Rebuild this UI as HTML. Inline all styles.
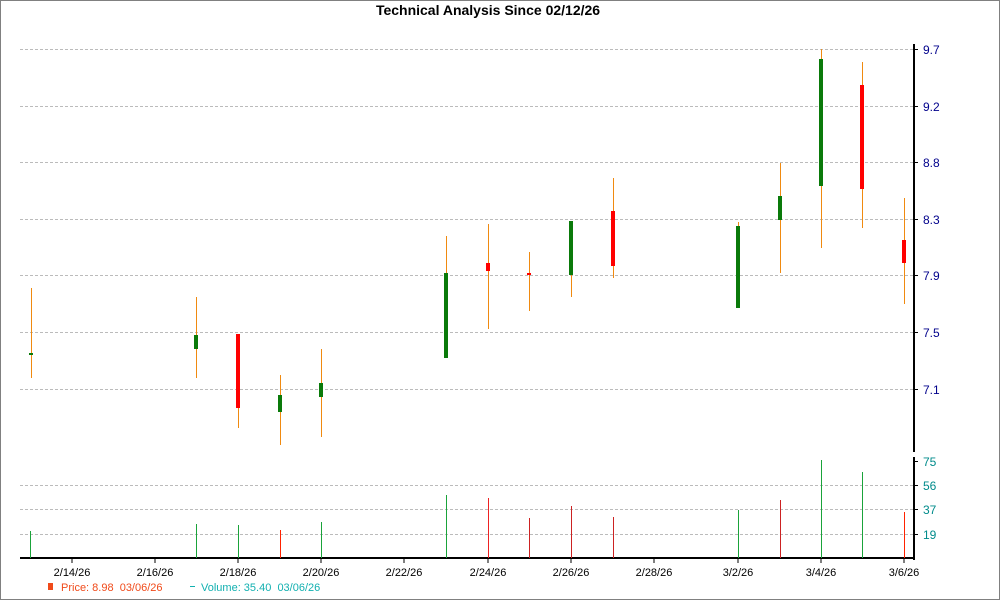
<!DOCTYPE html><html><head><meta charset="utf-8"><style>body{margin:0;background:#fff}svg{display:block;font-family:"Liberation Sans",sans-serif}text{white-space:pre}</style></head><body>
<svg width="1000" height="600" viewBox="0 0 1000 600">
<rect x="0.5" y="0.5" width="999" height="599" fill="#fff" stroke="#808080"/>
<text x="488" y="15" text-anchor="middle" font-size="14" font-weight="bold">Technical Analysis Since 02/12/26</text>
<g stroke="#bbb" stroke-dasharray="3,2" stroke-width="1">
<line x1="20" x2="914" y1="49.5" y2="49.5"/><line x1="20" x2="914" y1="106.5" y2="106.5"/><line x1="20" x2="914" y1="162.5" y2="162.5"/><line x1="20" x2="914" y1="219.5" y2="219.5"/><line x1="20" x2="914" y1="275.5" y2="275.5"/><line x1="20" x2="914" y1="332.5" y2="332.5"/><line x1="20" x2="914" y1="389.5" y2="389.5"/>
<line x1="20" x2="914" y1="485.5" y2="485.5"/><line x1="20" x2="914" y1="509.5" y2="509.5"/><line x1="20" x2="914" y1="534.5" y2="534.5"/>
</g>
<g stroke="#000" stroke-width="2"><line x1="914" x2="914" y1="44" y2="452"/><line x1="914" x2="914" y1="457" y2="560"/><line x1="20" x2="915" y1="558" y2="558"/></g>
<g stroke="#000"><line x1="914" x2="918" y1="49.5" y2="49.5"/><line x1="914" x2="918" y1="106.5" y2="106.5"/><line x1="914" x2="918" y1="162.5" y2="162.5"/><line x1="914" x2="918" y1="219.5" y2="219.5"/><line x1="914" x2="918" y1="275.5" y2="275.5"/><line x1="914" x2="918" y1="332.5" y2="332.5"/><line x1="914" x2="918" y1="389.5" y2="389.5"/><line x1="914" x2="918" y1="461.5" y2="461.5"/><line x1="914" x2="918" y1="485.5" y2="485.5"/><line x1="914" x2="918" y1="509.5" y2="509.5"/><line x1="914" x2="918" y1="534.5" y2="534.5"/>
<line x1="72" x2="72" y1="558" y2="563"/><line x1="155" x2="155" y1="558" y2="563"/><line x1="238" x2="238" y1="558" y2="563"/><line x1="321" x2="321" y1="558" y2="563"/><line x1="404" x2="404" y1="558" y2="563"/><line x1="488" x2="488" y1="558" y2="563"/><line x1="571" x2="571" y1="558" y2="563"/><line x1="654" x2="654" y1="558" y2="563"/><line x1="738" x2="738" y1="558" y2="563"/><line x1="821" x2="821" y1="558" y2="563"/><line x1="904" x2="904" y1="558" y2="563"/></g>
<g font-size="12" fill="#00008b"><text x="923" y="54">9.7</text><text x="923" y="111">9.2</text><text x="923" y="167">8.8</text><text x="923" y="224">8.3</text><text x="923" y="280">7.9</text><text x="923" y="337">7.5</text><text x="923" y="394">7.1</text></g>
<g font-size="12" fill="#008b8b"><text x="923" y="466">75</text><text x="923" y="490">56</text><text x="923" y="514">37</text><text x="923" y="539">19</text></g>
<g font-size="11" fill="#000" text-anchor="middle"><text x="72" y="576">2/14/26</text><text x="155" y="576">2/16/26</text><text x="238" y="576">2/18/26</text><text x="321" y="576">2/20/26</text><text x="404" y="576">2/22/26</text><text x="488" y="576">2/24/26</text><text x="571" y="576">2/26/26</text><text x="654" y="576">2/28/26</text><text x="738" y="576">3/2/26</text><text x="821" y="576">3/4/26</text><text x="904" y="576">3/6/26</text></g>
<g stroke="#f08a10" stroke-width="1">
<line x1="31.5" x2="31.5" y1="288" y2="378"/><line x1="196.5" x2="196.5" y1="297" y2="378"/><line x1="238.5" x2="238.5" y1="334" y2="428"/><line x1="280.5" x2="280.5" y1="375" y2="445"/><line x1="321.5" x2="321.5" y1="349" y2="437"/><line x1="446.5" x2="446.5" y1="236" y2="358"/><line x1="488.5" x2="488.5" y1="224" y2="329"/><line x1="529.5" x2="529.5" y1="252" y2="311"/><line x1="571.5" x2="571.5" y1="221" y2="297"/><line x1="613.5" x2="613.5" y1="178" y2="278"/><line x1="738.5" x2="738.5" y1="222" y2="308"/><line x1="780.5" x2="780.5" y1="163" y2="273"/><line x1="821.5" x2="821.5" y1="49" y2="248"/><line x1="862.5" x2="862.5" y1="62" y2="228"/><line x1="904.5" x2="904.5" y1="198" y2="304"/></g>
<g fill="#0a7a0a"><rect x="29" y="353" width="4" height="2"/><rect x="194" y="335" width="4" height="14"/><rect x="278" y="395" width="4" height="17"/><rect x="319" y="383" width="4" height="14"/><rect x="444" y="273" width="4" height="85"/><rect x="569" y="221" width="4" height="54"/><rect x="736" y="226" width="4" height="82"/><rect x="778" y="196" width="4" height="24"/><rect x="819" y="59" width="4" height="127"/></g>
<g fill="#f00"><rect x="236" y="334" width="4" height="74"/><rect x="486" y="263" width="4" height="8"/><rect x="527" y="273" width="4" height="2"/><rect x="611" y="211" width="4" height="55"/><rect x="860" y="85" width="4" height="104"/><rect x="902" y="240" width="4" height="23"/></g>
<g stroke-width="1">
<line stroke="#1aa33a" x1="30.5" x2="30.5" y1="531" y2="558"/><line stroke="#1aa33a" x1="196.5" x2="196.5" y1="524" y2="558"/><line stroke="#1aa33a" x1="238.5" x2="238.5" y1="525" y2="558"/><line stroke="#f20" x1="280.5" x2="280.5" y1="530" y2="558"/><line stroke="#1aa33a" x1="321.5" x2="321.5" y1="522" y2="558"/><line stroke="#1aa33a" x1="446.5" x2="446.5" y1="495" y2="558"/><line stroke="#e22" x1="488.5" x2="488.5" y1="498" y2="558"/><line stroke="#c22" x1="529.5" x2="529.5" y1="518" y2="558"/><line stroke="#c22" x1="571.5" x2="571.5" y1="506" y2="558"/><line stroke="#c22" x1="613.5" x2="613.5" y1="517" y2="558"/><line stroke="#1aa33a" x1="738.5" x2="738.5" y1="510" y2="558"/><line stroke="#c22" x1="780.5" x2="780.5" y1="500" y2="558"/><line stroke="#1aa33a" x1="821.5" x2="821.5" y1="460" y2="558"/><line stroke="#1aa33a" x1="862.5" x2="862.5" y1="472" y2="558"/><line stroke="#f20" x1="904.5" x2="904.5" y1="512" y2="558"/></g>
<rect x="48" y="583" width="5" height="7" fill="#f04a1a"/>
<text x="61" y="591" font-size="11" fill="#f04a1a">Price: 8.98  03/06/26</text>
<line x1="190" x2="195" y1="586.5" y2="586.5" stroke="#12b0b0"/>
<text x="201" y="591" font-size="11" fill="#12b0b0">Volume: 35.40  03/06/26</text>
</svg></body></html>
